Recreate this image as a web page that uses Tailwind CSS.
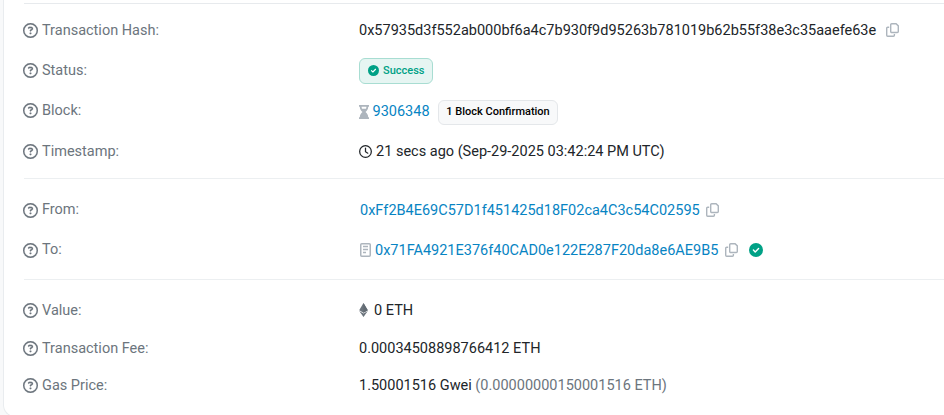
<!DOCTYPE html>
<html lang="en">
<head>
<meta charset="utf-8">
<title>Transaction Details</title>
<script src="https://cdn.jsdelivr.net/npm/@tailwindcss/browser@4"></script>
</head>
<body class="h-[415px] overflow-hidden bg-[#f8f9fa] font-[Roboto,sans-serif] text-[14.5px] leading-5 text-[#212529]">
<svg class="hidden">
  <symbol id="help" viewBox="0 0 512 512"><path fill="currentColor" stroke="currentColor" stroke-width="6" d="M464 256A208 208 0 1 0 48 256a208 208 0 1 0 416 0zM0 256a256 256 0 1 1 512 0A256 256 0 1 1 0 256zm169.8-90.7c7.9-22.3 29.1-37.3 52.8-37.3h58.3c34.9 0 63.1 28.3 63.1 63.1c0 22.6-12.1 43.5-31.7 54.8L280 264.4c-.2 13-10.9 23.6-24 23.6c-13.3 0-24-10.7-24-24V250.5c0-8.6 4.6-16.5 12.1-20.8l44.3-25.4c4.7-2.7 7.6-7.7 7.6-13.1c0-8.4-6.8-15.1-15.1-15.1H222.6c-3.4 0-6.4 2.1-7.5 5.3l-.4 1.2c-4.4 12.5-18.2 19-30.6 14.6s-19-18.2-14.6-30.6l.4-1.2zM224 352a32 32 0 1 1 64 0 32 32 0 1 1 -64 0z"/></symbol>
  <symbol id="copy" viewBox="0 0 13 14"><g fill="none" stroke="currentColor" stroke-width="1.4"><path d="M5.7.7h4.4l2.2 2.2v5.6a1 1 0 0 1-1 1H5.7a1 1 0 0 1-1-1V1.7a1 1 0 0 1 1-1z"/><path d="M3.2 4.2H1.7a1 1 0 0 0-1 1v7.1a1 1 0 0 0 1 1h5.7a1 1 0 0 0 1-1v-1.2"/></g></symbol>
  <symbol id="check" viewBox="0 0 14 14"><circle cx="7" cy="7" r="7" fill="currentColor"/><path d="M4.4 7.1l1.8 1.8 3.4-3.5" fill="none" stroke="#fff" stroke-width="1.4" stroke-linecap="round" stroke-linejoin="round"/></symbol>
</svg>
<main class="ml-[3px] h-[417px] w-[960px] rounded-bl-xl border-b border-l border-[#e9ecef] bg-white pl-5 pt-[3px]">
  <section class="h-[175px] border-t border-[#e7eaed] pt-[6px]">
    <div class="flex h-10 items-center"><div class="-ml-px flex w-[336px] items-center gap-[4px] text-[#6c757d]"><svg class="size-[15px]"><use href="#help"/></svg><span class="mt-[2px]">Transaction Hash:</span></div><span class="mt-[2px]">0x57935d3f552ab000bf6a4c7b930f9d95263b781019b62b55f38e3c35aaefe63e</span><svg class="ml-[10px] h-[14px] w-[13px] text-[#adb5bd]"><use href="#copy"/></svg></div>
    <div class="flex h-10 items-center"><div class="-ml-px flex w-[336px] items-center gap-[4px] text-[#6c757d]"><svg class="size-[15px]"><use href="#help"/></svg><span class="mt-[2px]">Status:</span></div><div class="mt-[2px] flex h-[26px] w-[74px] items-center gap-1 rounded-md border border-[#a8ddd2] bg-[#e6f5f2] pl-2 pb-px text-[11px] font-medium text-[#00a186]"><svg class="size-[11px]"><use href="#check"/></svg><span>Success</span></div></div>
    <div class="flex h-[41px] items-center"><div class="-ml-px flex w-[336px] items-center gap-[4px] text-[#6c757d]"><svg class="size-[15px]"><use href="#help"/></svg><span>Block:</span></div><svg class="mt-[2px] h-[14px] w-[10px] text-[#adb5bd]" viewBox="0 0 10 14"><path fill="currentColor" fill-rule="evenodd" d="M0 0h10v1.8H9.2C9.2 4.2 8 5.7 6.5 7 8 8.3 9.2 9.8 9.2 12.2h.8V14H0v-1.8h.8C.8 9.8 2 8.3 3.5 7 2 5.7.8 4.2.8 1.8H0zM2.6 1.8c0 .8.1 1.3.4 1.9h4c.3-.6.4-1.1.4-1.9z"/></svg><span class="ml-[3.5px] mt-[2px] text-[#0784c3]">9306348</span><div class="ml-[8.5px] mt-[3px] flex h-[25px] w-[120px] items-center justify-center rounded-md border border-[#e4e7ea] bg-[#f8f9fa] pb-px text-[11px] font-medium text-black">1 Block Confirmation</div></div>
    <div class="flex h-10 items-center"><div class="-ml-px flex w-[336px] items-center gap-[4px] text-[#6c757d]"><svg class="size-[15px]"><use href="#help"/></svg><span class="mt-[2px]">Timestamp:</span></div><svg class="size-[13px]" viewBox="0 0 13 13" fill="none" stroke="currentColor" stroke-width="1.25"><circle cx="6.5" cy="6.5" r="5.85"/><path d="M6.5 3v3.7l2.3 1.5" stroke-linecap="round"/></svg><span class="ml-[4px] mt-[2px]">21 secs ago (Sep-29-2025 03:42:24 PM UTC)</span></div>
  </section>
  <section class="h-[101px] border-t border-[#eceff1] pt-[11px]">
    <div class="flex h-10 items-center"><div class="-ml-px flex w-[337px] items-center gap-[4px] text-[#6c757d]"><svg class="size-[15px]"><use href="#help"/></svg><span>From:</span></div><span class="mt-[2px] text-[#0784c3]">0xFf2B4E69C57D1f451425d18F02ca4C3c54C02595</span><svg class="ml-[6.5px] h-[14px] w-[13px] text-[#adb5bd]"><use href="#copy"/></svg></div>
    <div class="flex h-10 items-center"><div class="-ml-px flex w-[337px] items-center gap-[4px] text-[#6c757d]"><svg class="size-[15px]"><use href="#help"/></svg><span>To:</span></div><svg class="h-[14px] w-[11px] text-[#adb5bd]" viewBox="0 0 11 14" fill="none" stroke="currentColor"><rect x=".75" y=".75" width="9.5" height="12.5" rx="1" stroke-width="1.5"/><path d="M3 3.5h5M3 6.5h5M3 9.5h3" stroke-width="1.3"/></svg><span class="ml-[4px] mt-[2px] text-[#0784c3]">0x71FA4921E376f40CAD0e122E287F20da8e6AE9B5</span><svg class="ml-[7px] h-[14px] w-[13px] text-[#adb5bd]"><use href="#copy"/></svg><svg class="ml-[11px] size-[14px] text-[#00a186]"><use href="#check"/></svg></div>
  </section>
  <section class="border-t border-[#eceff1] pt-[11px]">
    <div class="flex h-[38px] items-center"><div class="-ml-px flex w-[336px] items-center gap-[4px] text-[#6c757d]"><svg class="size-[15px]"><use href="#help"/></svg><span class="mt-[2px]">Value:</span></div><svg class="h-[14px] w-[9px]" viewBox="0 0 9 14"><path fill="#6c757d" d="M4.5 0l4.3 7.2-4.3 2.5L.2 7.2z"/><path fill="#626b73" d="M4.5 0v9.7l4.3-2.5z"/><path fill="#6c757d" d="M.2 8l4.3 2.5L8.8 8 4.5 14z"/></svg><span class="ml-[6px] mt-[2px]">0 ETH</span></div>
    <div class="flex h-[38px] items-center"><div class="-ml-px flex w-[336px] items-center gap-[4px] text-[#6c757d]"><svg class="size-[15px]"><use href="#help"/></svg><span class="mt-[2px]">Transaction Fee:</span></div><span class="mt-[2px]">0.00034508898766412 ETH</span></div>
    <div class="flex h-[37px] items-center"><div class="-ml-px flex w-[336px] items-center gap-[4px] text-[#6c757d]"><svg class="size-[15px]"><use href="#help"/></svg><span>Gas Price:</span></div><span>1.50001516 Gwei <span class="text-[#6c757d]">(0.00000000150001516 ETH)</span></span></div>
  </section>
</main>
</body>
</html>
